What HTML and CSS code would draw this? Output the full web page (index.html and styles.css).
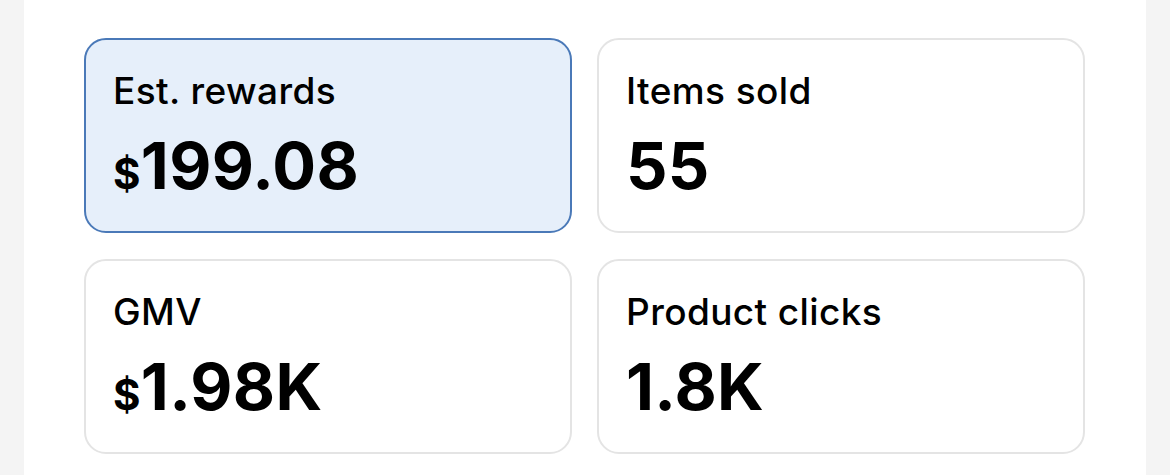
FILE: index.html
```html
<!DOCTYPE html>
<html>
<head>
<meta charset="utf-8">
<link rel="stylesheet" href="styles.css">
</head>
<body>
<div class="panel">
  <div class="grid">
    <div class="card active">
      <div class="label">Est. rewards</div>
      <div class="value"><span class="cur">$</span>199.08</div>
    </div>
    <div class="card">
      <div class="label">Items sold</div>
      <div class="value">55</div>
    </div>
    <div class="card">
      <div class="label">GMV</div>
      <div class="value"><span class="cur">$</span>1.98K</div>
    </div>
    <div class="card">
      <div class="label">Product clicks</div>
      <div class="value">1.8K</div>
    </div>
  </div>
</div>
</body>
</html>
```

FILE: styles.css
```css
html, body {
  margin: 0;
  padding: 0;
}
body {
  background: #f4f4f4;
  font-family: Inter, "Noto Sans", sans-serif;
  color: #000;
  height: 475px;
  overflow: hidden;
}
.panel {
  margin: 0 24px;
  width: 1122px;
  height: 475px;
  background: #fff;
  box-sizing: border-box;
  padding: 38px 61px 0 60px;
}
.grid {
  display: grid;
  grid-template-columns: 488px 488px;
  grid-template-rows: 195px 195px;
  column-gap: 25px;
  row-gap: 26px;
}
.card {
  box-sizing: border-box;
  border: 2px solid #e4e4e4;
  border-radius: 22px;
  background: #fff;
  padding: 28px 27px 0 27px;
}
.card.active {
  background: #e6effa;
  border-color: #4a79b8;
}
.label {
  font-size: 37px;
  line-height: 46px;
  font-weight: 500;
  letter-spacing: 0.4px;
}
.value {
  margin-top: 16px;
  font-size: 65px;
  line-height: 72px;
  font-weight: 700;
  letter-spacing: 0.3px;
}
.cur {
  font-size: 42px;
}
```
